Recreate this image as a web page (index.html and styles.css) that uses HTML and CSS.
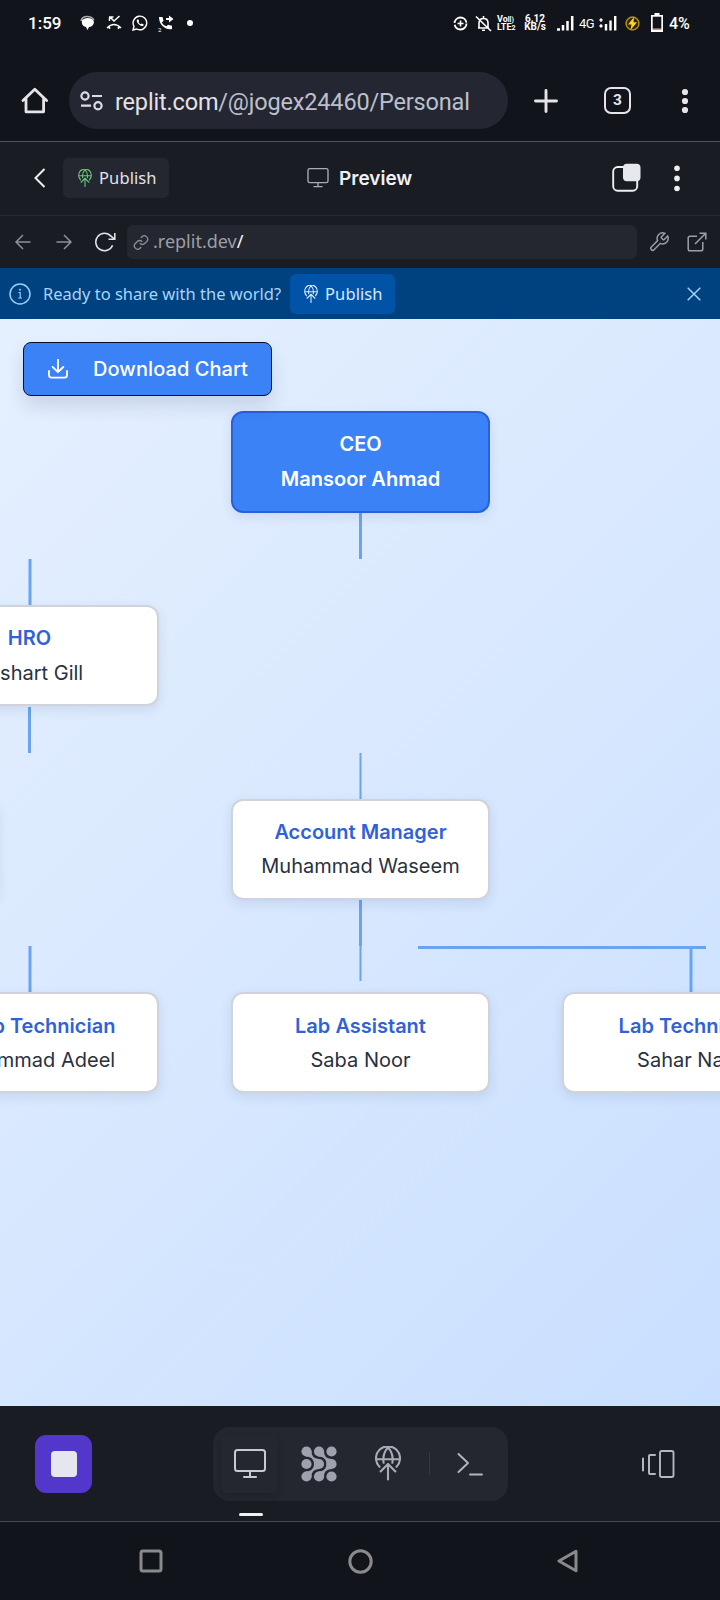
FILE: index.html
```html
<!DOCTYPE html>
<html lang="en">
<head>
<meta charset="utf-8">
<title>Preview</title>
<link rel="stylesheet" href="styles.css">
</head>
<body>
<svg width="0" height="0" class="defs">
  <defs>
    <symbol id="globe" viewBox="0 0 26 34">
      <g fill="none" stroke="currentColor" stroke-width="2.100" stroke-linecap="round" stroke-linejoin="round">
        <path d="M4.500 20.300A12 12 0 1 1 21.500 20.300M1.200 12.800H24.800M8.600 16.300C7.700 10 9.500 4.600 13 1C16.500 4.600 18.300 10 17.400 16.300M13 33V17.500M5.600 25L13 17.500L20.400 25"/>
      </g>
    </symbol>
    <symbol id="monitor" viewBox="0 0 32 30">
      <g fill="none" stroke="currentColor" stroke-width="2" stroke-linecap="round">
        <rect x="1" y="1" width="30" height="21" rx="2.500"/>
        <path d="M16 22V28M10 28H22"/>
      </g>
    </symbol>
  </defs>
</svg>
<div class="screen">
  <div class="status">
    <span class="time">1:59</span>
    <svg class="st-chat" width="16" height="16" viewBox="0 0 16 16"><path d="M2 5Q6 2 11 3.500Q15 5 13.500 9Q12 12 9 12L7.500 15L6 12Q1 11 2 5Z" fill="#fff"/><path d="M1 6Q2 1.500 7 1.500Q12 1.500 14 5" stroke="#aaa" stroke-width="1.500" fill="none"/></svg>
    <svg class="st-missed" width="16" height="16" viewBox="0 0 16 16"><path d="M1 13Q8 6 15 13M3.500 10.500V14M12.500 10.500V14M3.500 2.500V6M3 2H7.500M4 2L8 6L13.500 1" stroke="#fff" stroke-width="1.500" fill="none"/></svg>
    <svg class="st-wa" width="16" height="16" viewBox="0 0 16 16"><path d="M1 15L2 11.300A6.800 6.800 0 1 1 4.800 14Z" stroke="#fff" stroke-width="1.400" fill="none"/><path d="M5 4.500Q4 7 7 9.500Q10 12 11.500 10.500V9.300L9.500 8.500L8.700 9.300Q7 8.500 6.500 7L7.200 6.200L6.400 4.400Z" fill="#fff"/></svg>
    <svg class="st-fwd" width="16" height="17" viewBox="0 0 16 17"><path d="M1 2H4.500L5.500 6L3.700 7.400Q5 10 8.500 11.300L10 9.700L14 10.700V14Q8 15 4 10.500Q1 7 1 2ZM8 3H11V0.500L15.500 4L11 7.500V5H8Z" fill="#fff"/><text x="0" y="16.500" class="tiny">2</text></svg>
    <i class="st-dot"></i>
    <span class="grow"></span>
    <svg class="st-saver" width="15" height="15" viewBox="0 0 15 15"><circle cx="7.500" cy="7.500" r="6" fill="none" stroke="#fff" stroke-width="1.800" stroke-dasharray="17 1.850"/><path d="M7.500 4.500V10.500M4.500 7.500H10.500" stroke="#fff" stroke-width="1.600"/></svg>
    <svg class="st-bell" width="17" height="17" viewBox="0 0 17 17"><path d="M3 13H14M4 13V8Q4 3.500 8.500 3.500Q13 3.500 13 8V13M8.500 1V4M7 15.300H10M1 1.500L16 16" stroke="#fff" stroke-width="1.600" fill="none"/></svg>
    <div class="st-lte"><span>Vo<em>ll)</em></span><span>LTE<small>2</small></span></div>
    <div class="st-speed"><span>6.12</span><span>KB/s</span></div>
    <svg class="st-sig" width="17" height="15" viewBox="0 0 17 15"><path d="M0 13.500H3M6 14.500V9M10.500 14.500V5M15.200 14.500V0" stroke="#fff" stroke-width="2.500"/></svg>
    <span class="st-4g">4G</span>
    <svg class="st-sig2" width="18" height="15" viewBox="0 0 18 15"><path d="M2 6V3M0.500 4.500L2 2.800L3.500 4.500M2 8V11M0.500 9.500L2 11.200L3.500 9.500" stroke="#fff" stroke-width="1.200" fill="none"/><path d="M7 14.500V8M11.500 14.500V4.500M16.200 14.500V0" stroke="#fff" stroke-width="2.400"/></svg>
    <svg class="st-bolt" width="15" height="15" viewBox="0 0 15 15"><circle cx="7.500" cy="7.500" r="6.400" fill="#2c250f" stroke="#b58d13" stroke-width="1.500"/><path d="M9 1L3 8.500H6.500L5.500 14L12 6.200H8.500Z" fill="#ffd426"/></svg>
    <svg class="st-batt" width="12" height="19" viewBox="0 0 12 19"><path d="M3.500 0H8.500V2H12V19H0V2H3.500Z" fill="#fff"/><rect x="1.700" y="3.700" width="8.600" height="12" fill="#11141b"/><path d="M1.700 16.200H10.300" stroke="#d85b4b" stroke-width="1"/></svg>
    <span class="st-pct">4%</span>
  </div>

  <div class="browser">
    <svg class="home" width="28" height="28" viewBox="0 0 28 28"><path d="M2 13.500L13.800 2.200L25.600 13.500M5 11V24.800H22.600V11" fill="none" stroke="#e6e3ea" stroke-width="2.800" stroke-linecap="round" stroke-linejoin="round"/></svg>
    <div class="omnibox">
      <svg width="24" height="20" viewBox="0 0 24 20"><g fill="none" stroke="#dddce4" stroke-width="2.200"><circle cx="5" cy="5" r="3.600"/><circle cx="18" cy="14.700" r="3.600"/><path d="M12 5H22M1 14.700H11"/></g></svg>
      <span class="url"><b>replit.com</b>/@jogex24460/Personal</span>
    </div>
    <svg class="plus" width="24" height="24" viewBox="0 0 24 24"><path d="M12 1.500V22.500M1.500 12H22.500" stroke="#e6e3ea" stroke-width="2.900" stroke-linecap="round"/></svg>
    <span class="tabs">3</span>
    <svg class="dots" width="8" height="26" viewBox="0 0 8 26"><g fill="#e6e3ea"><circle cx="4" cy="4" r="3.100"/><circle cx="4" cy="13" r="3.100"/><circle cx="4" cy="22" r="3.100"/></g></svg>
  </div>

  <div class="header">
    <svg class="back" width="12" height="20" viewBox="0 0 12 20"><path d="M10.500 1L1.500 10L10.500 19" fill="none" stroke="#eceef2" stroke-width="2"/></svg>
    <div class="publish"><svg class="green" width="14" height="18"><use href="#globe"/></svg><span>Publish</span></div>
    <svg class="mon" width="22" height="20"><use href="#monitor"/></svg>
    <span class="title">Preview</span>
    <svg class="stack" width="29" height="29" viewBox="0 0 29 29"><rect x="1.200" y="4" width="24" height="23.700" rx="4.500" fill="none" stroke="#eceef2" stroke-width="1.900"/><rect x="11" y="0.700" width="17.500" height="17.500" rx="4" fill="#e6e8ed"/></svg>
    <svg class="kebab" width="6" height="27" viewBox="0 0 6 27"><g fill="#f0f1f4"><circle cx="3" cy="3.300" r="2.800"/><circle cx="3" cy="13.400" r="2.800"/><circle cx="3" cy="23.500" r="2.800"/></g></svg>
  </div>

  <div class="address">
    <svg class="ar-left" width="16" height="16" viewBox="0 0 16 16"><path d="M15.500 8H1.500M8 1L1 8L8 15" fill="none" stroke="#8d919c" stroke-width="1.500"/></svg>
    <svg class="ar-right" width="16" height="16" viewBox="0 0 16 16"><path d="M0.500 8H14.500M8 1L15 8L8 15" fill="none" stroke="#8d919c" stroke-width="1.500"/></svg>
    <svg class="reload" width="22" height="20" viewBox="0 0 22 20"><path d="M18.600 13.200A8.700 8.700 0 1 1 17 4.200L20.500 7M20.800 1V7.300H14.500" fill="none" stroke="#dfe1e7" stroke-width="1.600"/></svg>
    <div class="field">
      <svg width="16" height="17" viewBox="0 0 24 24"><path d="M10 13a5 5 0 0 0 7.540.54l3-3a5 5 0 0 0-7.070-7.070l-1.720 1.710M14 11a5 5 0 0 0-7.540-.54l-3 3a5 5 0 0 0 7.070 7.070l1.710-1.710" fill="none" stroke="#8d919c" stroke-width="1.900"/></svg>
      <span class="addr">.replit.dev<b>/</b></span>
    </div>
    <svg class="wrench" width="22" height="22" viewBox="0 0 24 24"><path d="M14.700 6.300a1 1 0 0 0 0 1.400l1.600 1.600a1 1 0 0 0 1.400 0l3.770-3.770a6 6 0 0 1-7.940 7.940l-6.910 6.910a2.120 2.120 0 0 1-3-3l6.910-6.910a6 6 0 0 1 7.940-7.940l-3.760 3.760z" fill="none" stroke="#9b9fa9" stroke-width="1.600"/></svg>
    <svg class="open" width="20" height="20" viewBox="0 0 20 20"><path d="M10 4.200H3Q1.200 4.200 1.200 6V17Q1.200 18.800 3 18.800H14Q15.800 18.800 15.800 17V10M8 12L18.500 1.500M12.500 1.200H18.800V7.500" fill="none" stroke="#9b9fa9" stroke-width="1.500"/></svg>
  </div>

  <div class="banner">
    <svg class="info" width="22" height="22" viewBox="0 0 22 22"><circle cx="11" cy="11" r="10" fill="none" stroke="#99ccf8" stroke-width="1.500"/><path d="M9.500 9.500H11.200V15M9.300 15H13" fill="none" stroke="#99ccf8" stroke-width="1.200"/><circle cx="11" cy="6.700" r="1" fill="#99ccf8"/></svg>
    <span class="ready">Ready to share with the world?</span>
    <div class="publish blue"><svg width="14" height="18"><use href="#globe"/></svg><span>Publish</span></div>
    <svg class="close" width="14" height="14" viewBox="0 0 14 14"><path d="M0.700 0.700L13.300 13.300M13.300 0.700L0.700 13.300" stroke="#a5d3ff" stroke-width="1.500"/></svg>
  </div>

  <div class="canvas">
    <svg class="links" width="720" height="1087" viewBox="0 319 720 1087">
      <g fill="#68a4f0">
        <path d="M359 513h3v46h-3zM28 707h3v46h-3zM359 900h3v46h-3zM418 946h288v3H418z"/>
        <path d="M28.500 559h3v46h-3zM28.500 946h3v46h-3zM689.500 949h3v43h-3zM359.500 753h2v46h-2zM359.500 946h2v35h-2z"/>
      </g>
    </svg>
    <div class="node ceo"><b>CEO</b><span>Mansoor Ahmad</span></div>
    <div class="node hro"><b>HRO</b><span>Bashart Gill</span></div>
    <div class="node side"></div>
    <div class="node account"><b>Account Manager</b><span>Muhammad Waseem</span></div>
    <div class="node tech-left"><b>Sr Lab Technician</b><span>Muhammad Adeel</span></div>
    <div class="node assistant"><b>Lab Assistant</b><span>Saba Noor</span></div>
    <div class="node tech-right"><b>Lab Technician</b><span>Sahar Naaz</span></div>
    <div class="download">
      <svg width="20" height="20" viewBox="0 0 20 20"><path d="M1 12V16Q1 18.700 3.500 18.700H16.500Q19 18.700 19 16V12M10 0.800V13M4.700 8L10 13.200L15.300 8" fill="none" stroke="#fff" stroke-width="1.800" stroke-linecap="round" stroke-linejoin="round"/></svg>
      <span>Download Chart</span>
    </div>
  </div>

  <div class="dock">
    <div class="stop"><i></i></div>
    <div class="tools">
      <div class="tool"><svg width="32" height="30"><use href="#monitor"/></svg></div>
      <svg class="agent" width="36" height="36" viewBox="0 0 36 36">
        <g fill="#9ea2ad"><circle cx="5.500" cy="5.500" r="5.100"/><circle cx="18" cy="5.500" r="5.100"/><circle cx="30.500" cy="5.500" r="5.100"/><circle cx="5.500" cy="18" r="5.100"/><circle cx="18" cy="18" r="5.100"/><circle cx="30.500" cy="18" r="5.100"/><circle cx="5.500" cy="30.500" r="5.100"/><circle cx="18" cy="30.500" r="5.100"/><circle cx="30.500" cy="30.500" r="5.100"/>
        <path d="M10.500 4.500Q10 12.500 18 12.900V23.100Q10 23.500 10.500 31.500L4.500 25.500C10 25.500 13 22.500 13 18S10 10.500 4.500 10.500ZM23 4.500Q22.500 12.500 30.500 12.900V23.100Q22.500 23.500 23 31.500L17 25.500C22.500 25.500 25.500 22.500 25.500 18S22.500 10.500 17 10.500Z"/></g>
      </svg>
      <svg class="deploy" width="26" height="35"><use href="#globe"/></svg>
      <i class="rule"></i>
      <svg class="shell" width="26" height="24" viewBox="0 0 26 24"><path d="M1.500 2L11 11L1.500 20M13 22.500H25" fill="none" stroke="#b3b6bf" stroke-width="1.900" stroke-linecap="round" stroke-linejoin="round"/></svg>
    </div>
    <svg class="switcher" width="34" height="28" viewBox="0 0 34 28"><path d="M2 8.500V20.500M14 5H9Q8 5 8 6V23Q8 24 9 24H14" fill="none" stroke="#b3b6c2" stroke-width="2" stroke-linecap="round"/><rect x="19" y="1" width="13.500" height="26" rx="1.800" fill="none" stroke="#b3b6c2" stroke-width="1.900"/></svg>
    <i class="marker"></i>
  </div>

  <div class="nav">
    <svg width="24" height="24" viewBox="0 0 24 24"><rect x="2" y="2" width="20" height="20" rx="2" fill="none" stroke="#8a8a8c" stroke-width="3"/></svg>
    <svg width="25" height="25" viewBox="0 0 25 25"><circle cx="12.500" cy="12.500" r="10.700" fill="none" stroke="#8a8a8c" stroke-width="3"/></svg>
    <svg width="22" height="24" viewBox="0 0 22 24"><path d="M2 12L19 2.300V21.700Z" fill="none" stroke="#8a8a8c" stroke-width="3" stroke-linejoin="round"/></svg>
  </div>
</div>
</body>
</html>
```
FILE: styles.css
```css
* { box-sizing: border-box; }
body { margin: 0; background: #11141b; font-family: "Noto Sans", sans-serif; }
svg { display: block; flex: none; }
.defs { position: absolute; }
.screen { width: 720px; height: 1600px; overflow: hidden; display: flex; flex-direction: column; }
.screen > div { flex: none; display: flex; align-items: center; white-space: nowrap; }

.status { height: 46px; padding: 0 30px 0 28px; color: #fff; font-family: Roboto, sans-serif; }
.time { font-size: 17px; font-weight: 500; width: 34px; letter-spacing: 0; }
.st-chat { margin-left: 18px; }
.st-missed { margin-left: 10px; }
.st-wa { margin-left: 10px; }
.st-fwd { margin-left: 10px; }
.tiny { font-size: 6px; fill: #fff; }
.st-dot { width: 6px; height: 6px; border-radius: 50%; background: #fff; margin-left: 13px; }
.grow { flex: 1; }
.st-bell { margin-left: 7px; }
.st-lte, .st-speed { display: flex; flex-direction: column; font-weight: 700; }
.st-lte { width: 20px; margin-left: 5px; font-size: 9px; line-height: 7.500px; padding-top: 2px; }
.st-lte em { font-style: normal; font-size: 7px; }
.st-lte small { font-size: 7px; }
.st-speed { width: 22px; margin-left: 7px; font-size: 10px; line-height: 8.500px; align-items: center; }
.st-sig { margin-left: 11px; }
.st-4g { margin-left: 5px; width: 16px; font-size: 13px; letter-spacing: -0.5px; }
.st-sig2 { margin-left: 4px; }
.st-bolt { margin-left: 8px; }
.st-batt { margin-left: 11px; margin-top: -1px; }
.st-pct { margin-left: 6px; width: 21px; font-size: 16px; font-weight: 500; }

.browser { height: 96px; padding-top: 14px; border-bottom: 1px solid #50525b; font-family: Roboto, sans-serif; }
.home { margin-left: 21px; }
.omnibox { display: flex; align-items: center; width: 439px; height: 57px; margin-left: 20px; padding-left: 11px; border-radius: 29px; background: #242732; }
.url { margin: 2px 0 0 11px; font-size: 23.500px; color: #bcc0ce; letter-spacing: -0.17px; }
.url b { font-weight: 400; color: #e3e2e9; }
.plus { margin-left: 26px; }
.tabs { width: 27px; height: 27px; margin-left: 46px; border: 2.800px solid #e6e3ea; border-radius: 7px; color: #e6e3ea; font-size: 15.500px; font-weight: 700; line-height: 22px; text-align: center; }
.dots { margin-left: 50px; }

.header { height: 74px; background: #1a1c24; border-bottom: 1px solid #262932; color: #f0f1f4; padding-bottom: 1px; }
.back { margin-left: 34px; }
.publish { display: flex; align-items: center; width: 106px; height: 40px; margin-left: 17px; padding-left: 15px; border-radius: 6px; background: #242730; color: #e1e3e8; font-size: 16.500px; }
.publish span { margin: -2px 0 0 7px; letter-spacing: 0.1px; }
.green { color: #64c879; }
.mon { margin-left: 138px; color: #a9adb6; }
.title { width: 80px; margin-left: 10px; font-family: Inter, sans-serif; font-size: 19px; font-weight: 600; }
.stack { margin-left: 193px; margin-top: -2px; }
.kebab { margin-left: 33px; }

.address { height: 52px; background: #1a1c24; }
.ar-left { margin-left: 15px; }
.ar-right { margin-left: 25px; }
.reload { margin-left: 22px; }
.field { display: flex; align-items: center; width: 510px; height: 34px; margin-left: 11px; padding-left: 6px; border-radius: 6px; background: #24272f; color: #9b9fa9; font-size: 18px; }
.addr { margin: -2px 0 0 4px; letter-spacing: 0; }
.addr b { color: #f5f6f8; font-weight: 400; }
.wrench { margin-left: 11px; }
.open { margin-left: 17px; }

.banner { height: 51px; background: #00417f; color: #a8d5fb; }
.info { margin-left: 9px; }
.ready { width: 239px; margin: -1px 0 0 12px; font-size: 16.500px; }
.publish.blue { width: 105px; margin-left: 8px; padding-left: 14px; background: #0053a6; color: #d5eaff; }
.publish.blue span { margin-top: -1px; }
.close { margin-left: 292px; }

.screen > .canvas { position: relative; display: block; height: 1087px; overflow: hidden; background: linear-gradient(135deg, #e5f0ff, #dae9fe 42%, #c9dfff); font-family: Inter, sans-serif; }
.links { position: absolute; left: 0; top: 0; }
.node { position: absolute; width: 259px; height: 101px; display: flex; flex-direction: column; align-items: center; padding-top: 14px; border: 2px solid #d0d3da; border-radius: 12px; background: #fff; color: #273142; font-size: 20px; line-height: 34.500px; box-shadow: 0 4px 12px rgba(40, 65, 110, 0.11); }
.node b { font-weight: 600; color: #2f62d9; }
.ceo { left: 231px; top: 92px; height: 102px; background: #3b82f6; border-color: #2861dc; color: #fff; font-weight: 600; }
.ceo b { color: #fff; }
.hro { left: -100px; top: 286px; }
.side { left: -261px; top: 480px; }
.account { left: 231px; top: 480px; }
.account span, .tech-left span, .assistant span, .tech-right span { margin-top: -0.500px; }
.tech-left { left: -100px; top: 673px; padding-top: 14.500px; }
.assistant { left: 231px; top: 673px; padding-top: 14.500px; }
.tech-right { left: 562px; top: 673px; padding-top: 14.500px; }
.download { position: absolute; left: 23px; top: 23px; width: 249px; height: 54px; display: flex; align-items: center; padding-left: 24px; border: 1px solid #080d2b; border-radius: 8px; background: #3b82f6; color: #fff; font-size: 20px; font-weight: 500; letter-spacing: 0.06px; box-shadow: 0 10px 18px rgba(40, 50, 90, 0.14); }
.download span { margin-left: 25px; }

.screen > .dock { position: relative; height: 116px; background: #1a1c24; border-bottom: 1px solid #46484f; }
.stop { display: flex; align-items: center; justify-content: center; width: 57px; height: 58px; margin-left: 35px; border-radius: 11px; background: #5237ca; }
.stop i { width: 26px; height: 26px; border-radius: 4px; background: #e6e7ee; }
.tools { display: flex; align-items: center; width: 295px; height: 74px; margin-left: 121px; padding-left: 8px; border-radius: 17px; background: #24272f; color: #b3b6bf; }
.tool { display: flex; align-items: center; justify-content: center; width: 57px; height: 58px; border-radius: 6px; box-shadow: 0 3px 9px rgba(10, 12, 18, 0.2); color: #c8cad1; }
.agent { margin-left: 23px; }
.deploy { margin-left: 38px; color: #a9acb6; }
.rule { width: 1px; height: 23px; margin-left: 28px; background: #353842; }
.shell { margin-left: 27px; }
.switcher { margin-left: 133px; }
.marker { position: absolute; left: 239px; top: 107px; width: 24px; height: 3px; border-radius: 2px; background: #f0f1f4; }

.nav { height: 78px; padding-left: 139px; gap: 184.500px; }
```
